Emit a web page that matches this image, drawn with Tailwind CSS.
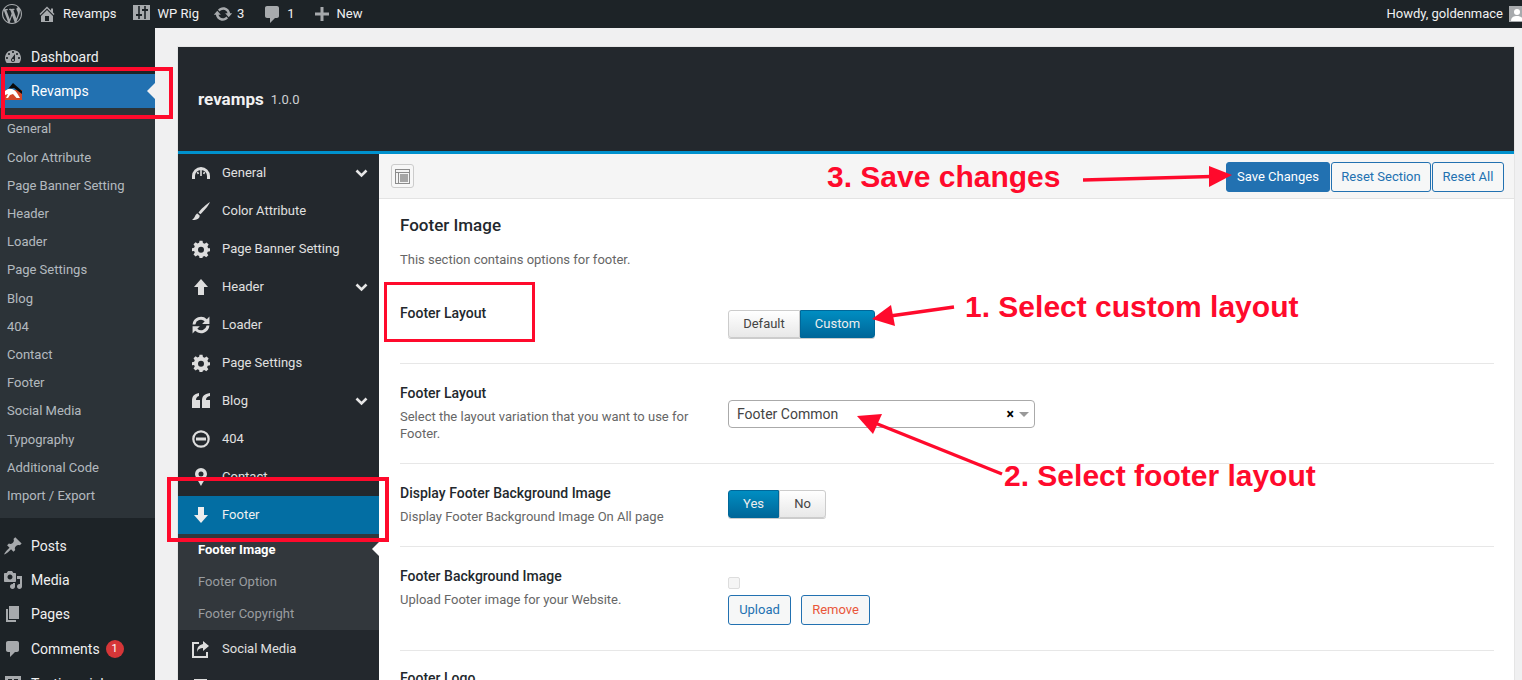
<!DOCTYPE html>
<html><head><meta charset="utf-8"><script src="https://cdn.jsdelivr.net/npm/@tailwindcss/browser@4"></script></head>
<body class="m-0">
<div class="relative w-[1522px] h-[680px] overflow-hidden bg-[#f0f0f1] font-['Roboto',sans-serif] text-[13px] text-[#444]">

<!-- admin bar -->
<div class="flex items-center h-[28px] bg-[#1d2327] text-[#f0f0f1] text-[13px]">
  <svg class="w-[20px] h-[20px] ml-[2px] fill-[#a7aaad]" viewBox="0 0 20 20"><path d="M20 10c0-5.51-4.49-10-10-10C4.48 0 0 4.49 0 10c0 5.52 4.48 10 10 10 5.51 0 10-4.48 10-10zM7.78 15.37L4.37 6.22c.55-.02 1.17-.08 1.17-.08.5-.06.44-1.13-.06-1.11 0 0-1.45.11-2.37.11-.18 0-.37 0-.58-.01C4.12 2.69 6.87 1.11 10 1.11c2.33 0 4.45.87 6.05 2.34-.68-.11-1.65.39-1.65 1.58 0 .74.45 1.36.9 2.1.35.61.55 1.36.55 2.46 0 1.49-1.4 5-1.4 5l-3.03-8.37c.54-.02.82-.17.82-.17.5-.05.44-1.25-.06-1.22 0 0-1.44.12-2.38.12-.87 0-2.33-.12-2.33-.12-.5-.03-.56 1.2-.06 1.22l.92.08 1.26 3.41zM17.41 10c.24-.64.74-1.87.43-4.25.7 1.29 1.05 2.71 1.05 4.25 0 3.29-1.73 6.24-4.4 7.78.97-2.59 1.94-5.2 2.92-7.78zM6.1 18.09C3.12 16.65 1.11 13.53 1.11 10c0-1.3.23-2.48.72-3.59C3.25 10.3 4.67 14.2 6.1 18.09zm4.03-6.63l2.58 6.98c-.86.29-1.76.45-2.71.45-.79 0-1.57-.11-2.29-.33.81-2.38 1.62-4.74 2.42-7.1z"/></svg>
  <svg class="w-[20px] h-[20px] ml-[15px] fill-[#a7aaad]" viewBox="0 0 20 20"><path d="M16 8.5l1.53 1.53-1.06 1.06L10 4.62l-6.47 6.47-1.06-1.06L10 2.5l4 4v-2h2v4zm-6-2.46l6 5.99V18H4v-5.97zM12 17v-5H8v5h4z"/></svg>
  <span class="ml-[6px]">Revamps</span>
  <svg class="w-[17px] h-[15px] ml-[16px] mb-[4px]" viewBox="0 0 17 15"><rect width="17" height="15" fill="#a7aaad"/><path d="M6 1v13M12 1v13" stroke="#1d2327" stroke-width="1.600"/><rect x="3" y="9" width="6" height="2" fill="#1d2327"/><rect x="9" y="4" width="6" height="2" fill="#1d2327"/></svg>
  <span class="ml-[8px]">WP Rig</span>
  <svg class="w-[20px] h-[20px] ml-[14px] fill-[#a7aaad]" viewBox="0 0 20 20"><path d="M10.2 3.28c3.53 0 6.43 2.61 6.92 6h2.08l-3.5 4-3.5-4h2.32c-.45-1.97-2.21-3.45-4.32-3.45-1.45 0-2.73.71-3.54 1.78L4.95 5.66C6.23 4.2 8.11 3.28 10.2 3.28zm-.4 13.44c-3.52 0-6.43-2.61-6.92-6H.8l3.5-4c1.17 1.33 2.33 2.67 3.5 4H5.48c.45 1.97 2.21 3.45 4.32 3.45 1.45 0 2.73-.71 3.54-1.78l1.71 1.95c-1.28 1.46-3.15 2.38-5.25 2.38z"/></svg>
  <span class="ml-[4px]">3</span>
  <svg class="w-[20px] h-[20px] ml-[18px] fill-[#a7aaad]" viewBox="0 0 20 20"><path d="M5 2h10c1.1 0 2 .9 2 2v8c0 1.1-.9 2-2 2h-2l-5 5v-5H5c-1.1 0-2-.9-2-2V4c0-1.1.9-2 2-2z"/></svg>
  <span class="ml-[5px]">1</span>
  <svg class="w-[20px] h-[20px] ml-[17px] fill-[#a7aaad]" viewBox="0 0 20 20"><path d="M17 8.5v3h-5.5V17h-3v-5.5H3v-3h5.5V3h3v5.5z"/></svg>
  <span class="ml-[5px]">New</span>
  <span class="ml-auto">Howdy, goldenmace</span>
  <span class="flex w-[16px] h-[16px] ml-[6px] mr-[-3px] bg-[#a7aaad] border border-[#a7aaad] shrink-0 items-end justify-center overflow-hidden">
    <svg class="w-[14px] h-[14px] fill-white" viewBox="0 0 14 14"><circle cx="7" cy="5" r="3"/><path d="M1 14c0-4 3-5 6-5s6 1 6 5z"/></svg>
  </span>
</div>

<div class="flex h-[652px]">
  <!-- wp sidebar -->
  <aside class="w-[155px] shrink-0 bg-[#1d2327] text-[#f0f0f1] text-[14px]">
    <div class="h-[12px]"></div>
    <div class="flex items-center h-[34px]">
      <svg class="w-[20px] h-[20px] ml-[3px] fill-[#a7aaad]" viewBox="0 0 20 20"><path d="M3.76 16h12.48c1.1-1.37 1.76-3.11 1.76-5 0-4.42-3.58-8-8-8s-8 3.58-8 8c0 1.89.66 3.63 1.76 5zM10 4c.55 0 1 .45 1 1s-.45 1-1 1-1-.45-1-1 .45-1 1-1zM6 6c.55 0 1 .45 1 1s-.45 1-1 1-1-.45-1-1 .45-1 1-1zm8 0c.55 0 1 .45 1 1s-.45 1-1 1-1-.45-1-1 .45-1 1-1zm-5.37 5.55L12 7v6c0 1.1-.9 2-2 2s-2-.9-2-2c0-.57.24-1.08.63-1.45zM4 10c.55 0 1 .45 1 1s-.45 1-1 1-1-.45-1-1 .45-1 1-1zm12 0c.55 0 1 .45 1 1s-.45 1-1 1-1-.45-1-1 .45-1 1-1zm-5 3c0-.55-.45-1-1-1s-1 .45-1 1 .45 1 1 1 1-.45 1-1z"/></svg>
      <span class="ml-[8px]">Dashboard</span>
    </div>
    <div class="relative flex items-center h-[34px] bg-[#2271b1] text-white">
      <svg class="w-[17px] h-[17px] ml-[5px]" viewBox="0 0 17 17"><path d="M0 7h17v10H0z" fill="#d2472a"/><path d="M3 6L8 0l9 8v3L9 5z" fill="#0b0b0b"/><path d="M0 8l3-2c4-1 7 1 9 4l3 5h-3.500L8 11l-3 1-2 3H1l2-4-3 1z" fill="#fff"/></svg>
      <span class="ml-[9px]">Revamps</span>
      <span class="absolute right-0 top-[9px] w-0 h-0 border-y-[8px] border-y-transparent border-r-[8px] border-r-[#f0f0f1]"></span>
    </div>
    <div class="bg-[#2c3338] h-[410px] pt-[7.300px] text-[13px] text-[#f0f6fc]/70 leading-[28.2px] pl-[7px]">
      <div>General</div><div>Color Attribute</div><div>Page Banner Setting</div><div>Header</div><div>Loader</div><div>Page Settings</div><div>Blog</div><div>404</div><div>Contact</div><div>Footer</div><div>Social Media</div><div>Typography</div><div>Additional Code</div><div>Import / Export</div>
    </div>
    <div class="h-[11px]"></div>
    <div class="flex items-center h-[34px]">
      <svg class="w-[20px] h-[20px] ml-[3px] fill-[#a7aaad]" viewBox="0 0 20 20"><path d="M10.44 3.02l1.82-1.82 6.36 6.35-1.83 1.82c-1.05-.68-2.48-.57-3.41.36l-.75.75c-.92.93-1.04 2.35-.35 3.41l-1.83 1.82-2.41-2.41-2.8 2.79c-.42.42-3.38 2.71-3.8 2.29s1.86-3.39 2.28-3.81l2.79-2.79L4.1 9.36l1.83-1.82c1.05.69 2.48.57 3.4-.36l.75-.75c.93-.92 1.05-2.35.36-3.41z"/></svg>
      <span class="ml-[8px]">Posts</span>
    </div>
    <div class="flex items-center h-[34px]">
      <svg class="w-[20px] h-[20px] ml-[3px] fill-[#a7aaad]" viewBox="0 0 20 20"><path d="M13 11V4c0-.55-.45-1-1-1h-1.67L9 1H5L3.67 3H2c-.55 0-1 .45-1 1v7c0 .55.45 1 1 1h10c.55 0 1-.45 1-1zM7 4.5c1.38 0 2.5 1.12 2.5 2.5S8.38 9.5 7 9.5 4.5 8.38 4.5 7 5.62 4.5 7 4.5zM14 6h5v10.5c0 1.38-1.12 2.5-2.5 2.5S14 17.88 14 16.5s1.12-2.5 2.5-2.5c.17 0 .34.02.5.05V9h-3V6zm-4 8.05V13h2v3.5c0 1.38-1.12 2.5-2.5 2.5S7 17.88 7 16.5 8.12 14 9.5 14c.17 0 .34.02.5.05z"/></svg>
      <span class="ml-[8px]">Media</span>
    </div>
    <div class="flex items-center h-[34px]">
      <svg class="w-[20px] h-[20px] ml-[3px] fill-[#a7aaad]" viewBox="0 0 20 20"><path d="M6 15V2h10v13H6zm-1 1h8v2H3V5h2v11z"/></svg>
      <span class="ml-[8px]">Pages</span>
    </div>
    <div class="flex items-center h-[36px]">
      <svg class="w-[20px] h-[20px] ml-[3px] fill-[#a7aaad]" viewBox="0 0 20 20"><path d="M5 2h9c1.1 0 2 .9 2 2v7c0 1.1-.9 2-2 2h-2l-5 5v-5H5c-1.1 0-2-.9-2-2V4c0-1.1.9-2 2-2z"/></svg>
      <span class="ml-[8px]">Comments</span>
      <span class="flex items-center justify-center w-[18px] h-[18px] ml-[6px] rounded-full bg-[#d63638] text-white text-[11px]">1</span>
    </div>
    <div class="flex items-center h-[34px]">
      <svg class="w-[20px] h-[20px] ml-[3px] fill-[#a7aaad]" viewBox="0 0 20 20"><path d="M2 2h16v12H8l-4 4v-4H2zM5 5v3h4V5zm6 0v3h4V5z"/></svg>
      <span class="ml-[8px]">Testimonials</span>
    </div>
  </aside>

  <!-- options panel -->
  <main class="ml-[22px] mt-[18px] w-[1338px] h-[700px] shrink-0 border border-[#e5e5e5] border-b-0 bg-white">
    <div class="flex items-center h-[102px] pl-[20px] pt-[2px] bg-[#23282d] border-b-[3px] border-b-[#0091cd] box-content">
      <span class="text-[17px] font-bold text-[#f1f1f1]">revamps</span>
      <span class="ml-[7px] text-[13px] text-[#cfd1d3]">1.0.0</span>
    </div>
    <div class="flex">
      <!-- panel nav -->
      <nav class="w-[201px] shrink-0 bg-[#23282d] text-[13px] text-[#e0e0e0]">
        <div class="flex items-center h-[38px]">
          <svg class="w-[18px] h-[13px] ml-[14px] mb-[1px]" viewBox="0 0 18 13"><path d="M1.500 13V10a7.500 7.500 0 0 1 15 0v3" fill="none" stroke="#ddd" stroke-width="3"/><path d="M9 4v6M5.500 6l.8 2M12.500 6l-.8 2" stroke="#ddd" stroke-width="1.600"/></svg>
          <span class="ml-[12px]">General</span>
          <svg class="w-[13px] h-[9px] ml-auto mr-[11px]" viewBox="0 0 13 9"><path d="M1.500 1.500l5 5 5-5" fill="none" stroke="#e6e6e6" stroke-width="2.600"/></svg>
        </div>
        <div class="flex items-center h-[38px]">
          <svg class="w-[18px] h-[18px] ml-[14px] fill-[#ddd]" viewBox="0 0 18 18"><path d="M18 0C14 2.500 9 7 6.500 10.500l1.800 1.800C11.500 9.500 16 4.500 18 0zM5.500 11.500C3 12 3.500 15.500 0 18c3.500.3 7.500-.5 7.800-4.200z"/></svg>
          <span class="ml-[12px]">Color Attribute</span>
        </div>
        <div class="flex items-center h-[38px]">
          <svg class="w-[18px] h-[18px] ml-[14px] fill-[#ddd]" viewBox="0 0 24 24" fill-rule="evenodd"><path d="M10 1h4l.6 3 2.200.9L19.400 3.300l2.800 2.800-1.600 2.600.9 2.200L24 11v4l-3 .5-.9 2.200 1.700 2.500-2.800 2.800-2.500-1.700-2.200.9L14 24h-4l-.5-2.800-2.200-.9-2.500 1.700-2.800-2.800 1.700-2.500-.9-2.200L0 15v-4l2.800-.6.900-2.200L2 5.700l2.800-2.800 2.500 1.700 2.200-.9zM12 9a4 4 0 1 0 0 8 4 4 0 0 0 0-8z"/></svg>
          <span class="ml-[12px]">Page Banner Setting</span>
        </div>
        <div class="flex items-center h-[38px]">
          <svg class="w-[18px] h-[18px] ml-[14px] fill-[#ddd]" viewBox="0 0 18 18"><path d="M9 1l7 8h-4v8H6V9H2z"/></svg>
          <span class="ml-[12px]">Header</span>
          <svg class="w-[13px] h-[9px] ml-auto mr-[11px]" viewBox="0 0 13 9"><path d="M1.500 1.500l5 5 5-5" fill="none" stroke="#e6e6e6" stroke-width="2.600"/></svg>
        </div>
        <div class="flex items-center h-[38px]">
          <svg class="w-[18px] h-[18px] ml-[14px] fill-[#ddd]" viewBox="1 1 16 16"><path d="M1.500 8.500a7.500 7.500 0 0 1 12.700-4.700L16.500 1.500v6.500H10l2.300-2.300A5 5 0 0 0 4 8.500zM16.500 9.500a7.500 7.500 0 0 1-12.700 4.700l-2.300 2.300V10H8l-2.300 2.300A5 5 0 0 0 14 9.500z"/></svg>
          <span class="ml-[12px]">Loader</span>
        </div>
        <div class="flex items-center h-[38px]">
          <svg class="w-[18px] h-[18px] ml-[14px] fill-[#ddd]" viewBox="0 0 24 24" fill-rule="evenodd"><path d="M10 1h4l.6 3 2.200.9L19.400 3.300l2.800 2.800-1.600 2.600.9 2.200L24 11v4l-3 .5-.9 2.200 1.700 2.500-2.800 2.800-2.500-1.700-2.200.9L14 24h-4l-.5-2.800-2.200-.9-2.500 1.700-2.800-2.800 1.700-2.500-.9-2.200L0 15v-4l2.800-.6.900-2.200L2 5.700l2.800-2.800 2.500 1.700 2.200-.9zM12 9a4 4 0 1 0 0 8 4 4 0 0 0 0-8z"/></svg>
          <span class="ml-[12px]">Page Settings</span>
        </div>
        <div class="flex items-center h-[38px]">
          <svg class="w-[18px] h-[16px] ml-[14px] fill-[#ddd]" viewBox="0 0 18 16"><path d="M0 8C0 3 2 1 7 0v3C5 3.500 4 5 4 7h4v8H0zM10 8c0-5 2-7 8-8v3c-3 .5-4 2-4 4h4v8h-8z"/></svg>
          <span class="ml-[12px]">Blog</span>
          <svg class="w-[13px] h-[9px] ml-auto mr-[11px]" viewBox="0 0 13 9"><path d="M1.500 1.500l5 5 5-5" fill="none" stroke="#e6e6e6" stroke-width="2.600"/></svg>
        </div>
        <div class="flex items-center h-[38px]">
          <svg class="w-[18px] h-[18px] ml-[14px]" viewBox="0 0 18 18"><circle cx="9" cy="9" r="7.700" fill="none" stroke="#ddd" stroke-width="2.200"/><rect x="4" y="7.500" width="10" height="3" fill="#ddd"/></svg>
          <span class="ml-[12px]">404</span>
        </div>
        <div class="flex items-center h-[38px]">
          <svg class="w-[18px] h-[18px] ml-[14px] fill-[#ddd]" viewBox="0 0 18 18" fill-rule="evenodd"><path d="M9 0a6 6 0 0 1 6 6c0 3-4 8-6 12C7 14 3 9 3 6a6 6 0 0 1 6-6zm0 3.500a2.500 2.500 0 1 0 0 5 2.500 2.500 0 0 0 0-5z"/></svg>
          <span class="ml-[12px]">Contact</span>
        </div>
        <div class="flex items-center h-[38px] bg-[#036ea3] text-[#f0f0f0]">
          <svg class="w-[18px] h-[18px] ml-[14px] fill-[#eee]" viewBox="0 0 18 18"><path d="M9 17l7-8h-4V1H6v8H2z"/></svg>
          <span class="ml-[12px]">Footer</span>
        </div>
        <div class="relative h-[96px] bg-[#32373c] text-[#9a9da0] pl-[20px]">
          <div class="h-[32px] leading-[32px] font-bold text-white">Footer Image</div>
          <div class="h-[32px] leading-[32px]">Footer Option</div>
          <div class="h-[32px] leading-[32px]">Footer Copyright</div>
          <span class="absolute right-0 top-[8px] w-0 h-0 border-y-[7px] border-y-transparent border-r-[7px] border-r-white"></span>
        </div>
        <div class="flex items-center h-[38px]">
          <svg class="w-[18px] h-[18px] ml-[14px]" viewBox="0 0 18 18"><path d="M7 3H1v14h14v-5" fill="none" stroke="#ddd" stroke-width="2"/><path d="M11 1l6 5-6 5V8C8 8 6 9 5 12c0-5 2-7 6-8z" fill="#ddd"/></svg>
          <span class="ml-[12px]">Social Media</span>
        </div>
        <div class="flex items-center h-[38px]">
          <svg class="w-[18px] h-[18px] ml-[14px] fill-[#ddd]" viewBox="0 0 18 18"><path d="M2 1h13v4h-2V3h-4v12h2v2H6v-2h2V3H4v2H2z"/></svg>
          <span class="ml-[12px]">Typography</span>
        </div>
      </nav>

      <!-- content -->
      <section class="flex-1 min-w-0">
        <div class="flex items-center h-[45px] pl-[12px] pr-[10px] bg-[#f5f5f5] border-b border-b-[#e3e3e3]">
          <span class="flex items-center justify-center w-[23px] h-[24px] border border-[#ccc] rounded-[3px] bg-[#f7f7f7]">
            <svg class="w-[15px] h-[15px]" viewBox="0 0 15 15"><rect width="15" height="15" fill="#8c8c8c"/><rect x="1" y="1" width="13" height="13" fill="#f4f4f4"/><rect x="1" y="3" width="13" height="1" fill="#8c8c8c"/><rect x="3" y="3" width="1" height="11" fill="#8c8c8c"/><rect x="5" y="5" width="8" height="8" fill="#a5a5a5"/></svg>
          </span>
          <div class="ml-auto mt-[1px] flex gap-[1px]">
            <button class="h-[30px] w-[104px] rounded-[3px] bg-[#2271b1] border border-[#2271b1] text-white text-[13px]">Save Changes</button>
            <button class="h-[30px] w-[100px] rounded-[3px] bg-[#f6f7f7] border border-[#2271b1] text-[#2271b1] text-[13px]">Reset Section</button>
            <button class="h-[30px] w-[72px] rounded-[3px] bg-[#f6f7f7] border border-[#2271b1] text-[#2271b1] text-[13px]">Reset All</button>
          </div>
        </div>

        <div class="pl-[21px] pr-[20px]">
          <h2 class="pt-[15px] text-[17px] leading-[22px] font-medium text-[#23282d]">Footer Image</h2>
          <p class="mt-[14px] text-[13px] leading-[20px] text-[#666]">This section contains options for footer.</p>

          <div class="flex h-[94px] border-b border-b-[#e7e7e7]">
            <div class="w-[328px] pt-[33px] text-[14px] leading-[20px] font-medium text-[#23282d]">Footer Layout</div>
            <div class="pt-[40px]">
              <div class="flex h-[28px] text-[13px] rounded-[3px] shadow-[0_1px_0_#ccc]">
                <span class="flex items-center justify-center w-[72px] bg-gradient-to-b from-white to-[#e8e8e8] border border-[#ccc] rounded-l-[3px] text-[#444]">Default</span>
                <span class="flex items-center justify-center w-[75px] bg-gradient-to-b from-[#008ec2] to-[#006799] border border-[#006799] rounded-r-[3px] text-[#eee]">Custom</span>
              </div>
            </div>
          </div>

          <div class="flex h-[100px] border-b border-b-[#e7e7e7]">
            <div class="w-[328px] pt-[19px]">
              <div class="text-[14px] leading-[20px] font-medium text-[#23282d]">Footer Layout</div>
              <p class="mt-[5px] text-[13px] leading-[17px] text-[#666] w-[300px]">Select the layout variation that you want to use for Footer.</p>
            </div>
            <div class="pt-[36px]">
              <div class="flex items-center w-[307px] h-[28px] pl-[8px] bg-white border border-[#aaa] rounded-[4px] text-[14px] text-[#444]">
                <span class="pt-[1px]">Footer Common</span>
                <span class="ml-auto text-[14px] font-bold text-black leading-none">×</span>
                <span class="ml-[5px] mr-[5px] w-0 h-0 border-x-[5px] border-x-transparent border-t-[5px] border-t-[#999]"></span>
              </div>
            </div>
          </div>

          <div class="flex h-[83px] border-b border-b-[#e7e7e7]">
            <div class="w-[328px] pt-[19px]">
              <div class="text-[14px] leading-[20px] font-medium text-[#23282d]">Display Footer Background Image</div>
              <p class="mt-[5px] text-[13px] leading-[17px] text-[#666]">Display Footer Background Image On All page</p>
            </div>
            <div class="pt-[26px]">
              <div class="flex h-[28px] text-[13px] rounded-[3px] shadow-[0_1px_0_#ccc]">
                <span class="flex items-center justify-center w-[51px] bg-gradient-to-b from-[#008ec2] to-[#006799] border border-[#006799] rounded-l-[3px] text-[#eee]">Yes</span>
                <span class="flex items-center justify-center w-[47px] bg-gradient-to-b from-white to-[#e8e8e8] border border-[#ccc] rounded-r-[3px] text-[#444]">No</span>
              </div>
            </div>
          </div>

          <div class="flex h-[104px] border-b border-b-[#e7e7e7]">
            <div class="w-[328px] pt-[19px]">
              <div class="text-[14px] leading-[20px] font-medium text-[#23282d]">Footer Background Image</div>
              <p class="mt-[5px] text-[13px] leading-[17px] text-[#666]">Upload Footer image for your Website.</p>
            </div>
            <div class="pt-[30px]">
              <span class="block w-[12px] h-[12px] border border-[#ddd] rounded-[2px] bg-[#f5f5f5]"></span>
              <div class="flex gap-[10px] mt-[6px]">
                <span class="flex items-center justify-center w-[63px] h-[30px] rounded-[3px] border border-[#2271b1] bg-[#f6f7f7] text-[#2271b1] text-[13px]">Upload</span>
                <span class="flex items-center justify-center w-[69px] h-[30px] rounded-[3px] border border-[#2271b1] bg-[#f6f7f7] text-[#e9563a] text-[13px]">Remove</span>
              </div>
            </div>
          </div>

          <div class="pt-[17px] text-[14px] leading-[20px] font-medium text-[#23282d]">Footer Logo</div>
        </div>
      </section>
    </div>
  </main>
</div>

<!-- annotations -->
<div class="absolute left-[1px] top-[67px] w-[172px] h-[52px] border-[4px] border-[#ff0a2c]"></div>
<div class="absolute left-[384px] top-[282px] w-[151px] h-[60px] border-[3px] border-[#ff0a2c]"></div>
<div class="absolute left-[167px] top-[477px] w-[222px] h-[65px] border-[4px] border-[#ff0a2c]"></div>
<svg class="absolute left-0 top-0 w-[1522px] h-[680px]" viewBox="0 0 1522 680">
  <g fill="#ff0a2c" stroke="none">
    <path d="M1232 175L1209 166v21z"/><path d="M872 319L891 305l4 21z"/><path d="M857 416L882 414l-9 20z"/>
  </g>
  <g stroke="#ff0a2c" stroke-width="3.500" fill="none">
    <path d="M1083 180L1212 176.500"/><path d="M954 307L890 316"/><path d="M1002 474L875 423"/>
  </g>
</svg>
<span class="absolute left-[827px] top-[159px] font-['Liberation_Sans',sans-serif] font-bold text-[30px] leading-[36px] text-[#ff0a2c] whitespace-nowrap">3. Save changes</span>
<span class="absolute left-[965px] top-[289px] font-['Liberation_Sans',sans-serif] font-bold text-[30px] leading-[36px] text-[#ff0a2c] whitespace-nowrap">1. Select custom layout</span>
<span class="absolute left-[1004px] top-[458px] font-['Liberation_Sans',sans-serif] font-bold text-[30px] leading-[36px] text-[#ff0a2c] whitespace-nowrap">2. Select footer layout</span>
</div>
</body></html>
